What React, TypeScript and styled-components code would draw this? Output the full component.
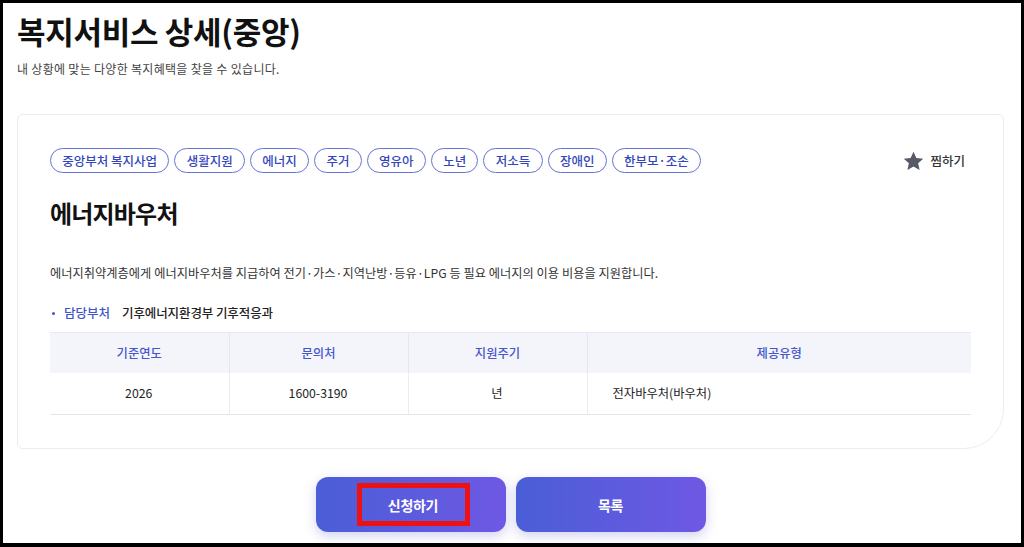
import React from "react";
import styled, { createGlobalStyle } from "styled-components";

const GlobalStyle = createGlobalStyle`
  html, body { margin: 0; padding: 0; background: #fff; }
  body { font-family: "Noto Sans CJK KR", "Noto Sans", sans-serif; color: #222; }
  * { box-sizing: border-box; }
`;

const Frame = styled.div`
  width: 1024px;
  height: 547px;
  border: 3px solid #000;
  border-bottom-width: 4px;
  background: #fff;
  padding: 8px 17px 0 14px;
  overflow: hidden;
`;

const Title = styled.h1`
  margin: 0;
  font-size: 31px;
  line-height: 40px;
  font-weight: 700;
  letter-spacing: -0.3px;
  color: #111;
`;

const Subtitle = styled.p`
  margin: 9px 0 0;
  font-size: 12px;
  line-height: 18px;
  letter-spacing: 0.3px;
  color: #444;
`;

const Card = styled.section`
  margin-top: 36px;
  border: 1px solid #ececec;
  border-radius: 6px 6px 40px 6px;
  padding: 33px 32px 33px 32px;
`;

const TopRow = styled.div`
  display: flex;
  align-items: center;
  justify-content: space-between;
`;

const Tags = styled.div`
  display: flex;
  gap: 5px;
`;

const Tag = styled.span`
  display: inline-flex;
  align-items: center;
  height: 25px;
  padding: 0 11.3px;
  border: 1px solid #6673d6;
  border-radius: 13px;
  font-size: 12.5px;
  font-weight: 500;
  color: #3446bd;
`;

const Favorite = styled.button`
  display: flex;
  align-items: center;
  gap: 6px;
  margin-right: 6px;
  border: 0;
  background: none;
  padding: 0;
  font-family: inherit;
  font-size: 12.5px;
  font-weight: 500;
  color: #333;
  cursor: pointer;
`;

const ServiceName = styled.h2`
  margin: 24px 0 0;
  font-size: 24px;
  line-height: 32px;
  font-weight: 700;
  letter-spacing: -0.8px;
  color: #111;
`;

const Description = styled.p`
  margin: 35px 0 0;
  font-size: 12.2px;
  line-height: 18px;
  letter-spacing: 0.05px;
  color: #333;
`;

const InfoLine = styled.div`
  margin-top: 22px;
  display: flex;
  align-items: center;
  font-size: 12.5px;
  line-height: 18px;
  font-weight: 500;
`;

const Bullet = styled.span`
  width: 3px;
  height: 3px;
  border-radius: 50%;
  background: #3b55c9;
  margin: 0 9px 0 2px;
`;

const InfoLabel = styled.span`
  color: #3b55c9;
  margin-right: 12px;
`;

const InfoValue = styled.span`
  color: #222;
  letter-spacing: -0.1px;
`;

const Table = styled.table`
  margin-top: 10px;
  width: 100%;
  border-collapse: collapse;
  table-layout: fixed;
  font-size: 12.3px;
`;

const Th = styled.th`
  height: 40px;
  background: #f4f5fb;
  border-top: 1px solid #e8e9f0;
  border-left: 1px solid #e6e7ee;
  font-weight: 500;
  color: #4657cc;
  text-align: center;
  &:first-child { border-left: 0; }
`;

const Td = styled.td<{ $left?: boolean }>`
  height: 42px;
  border-bottom: 1px solid #e6e6e6;
  border-left: 1px solid #ececec;
  color: #222;
  text-align: ${(p) => (p.$left ? "left" : "center")};
  padding-left: ${(p) => (p.$left ? "25px" : "0")};
  &:first-child { border-left: 0; }
`;

const Actions = styled.div`
  margin-top: 28px;
  display: flex;
  justify-content: center;
  gap: 10px;
`;

const ActionButton = styled.button`
  width: 190px;
  height: 55px;
  border: 0;
  border-radius: 12px;
  background: linear-gradient(90deg, #4a5ed6 0%, #6e58e4 100%);
  box-shadow: 0 4px 12px rgba(90, 90, 210, 0.28);
  color: #fff;
  font-family: inherit;
  font-size: 14px;
  font-weight: 700;
  letter-spacing: -0.3px;
  display: flex;
  align-items: center;
  justify-content: center;
  cursor: pointer;
`;

const Highlight = styled.span`
  display: inline-flex;
  align-items: center;
  justify-content: center;
  width: 113px;
  height: 43px;
  margin: 0 0 0 5px;
  border: 5px solid #ee1111;
`;

const tags = ["중앙부처 복지사업", "생활지원", "에너지", "주거", "영유아", "노년", "저소득", "장애인", "한부모·조손"];

const StarIcon = () => (
  <svg width="21" height="20" viewBox="0 0 24 23" aria-hidden="true">
    <path
      d="M12 0.8l3.3 7.2 7.9 0.8-5.9 5.3 1.7 7.8L12 17.9l-7 4 1.7-7.8L0.8 8.8l7.9-0.8z"
      fill="#555968"
    />
  </svg>
);

export default function App() {
  return (
    <>
      <GlobalStyle />
      <Frame>
        <Title>복지서비스 상세(중앙)</Title>
        <Subtitle>내 상황에 맞는 다양한 복지혜택을 찾을 수 있습니다.</Subtitle>
        <Card>
          <TopRow>
            <Tags>
              {tags.map((t) => (
                <Tag key={t}>{t}</Tag>
              ))}
            </Tags>
            <Favorite>
              <StarIcon />
              찜하기
            </Favorite>
          </TopRow>
          <ServiceName>에너지바우처</ServiceName>
          <Description>
            에너지취약계층에게 에너지바우처를 지급하여 전기·가스·지역난방·등유·LPG 등 필요 에너지의 이용 비용을 지원합니다.
          </Description>
          <InfoLine>
            <Bullet />
            <InfoLabel>담당부처</InfoLabel>
            <InfoValue>기후에너지환경부 기후적응과</InfoValue>
          </InfoLine>
          <Table>
            <colgroup>
              <col style={{ width: "179px" }} />
              <col style={{ width: "179px" }} />
              <col style={{ width: "179px" }} />
              <col />
            </colgroup>
            <thead>
              <tr>
                <Th>기준연도</Th>
                <Th>문의처</Th>
                <Th>지원주기</Th>
                <Th>제공유형</Th>
              </tr>
            </thead>
            <tbody>
              <tr>
                <Td>2026</Td>
                <Td>1600-3190</Td>
                <Td>년</Td>
                <Td $left>전자바우처(바우처)</Td>
              </tr>
            </tbody>
          </Table>
        </Card>
        <Actions>
          <ActionButton>
            <Highlight>신청하기</Highlight>
          </ActionButton>
          <ActionButton>목록</ActionButton>
        </Actions>
      </Frame>
    </>
  );
}
